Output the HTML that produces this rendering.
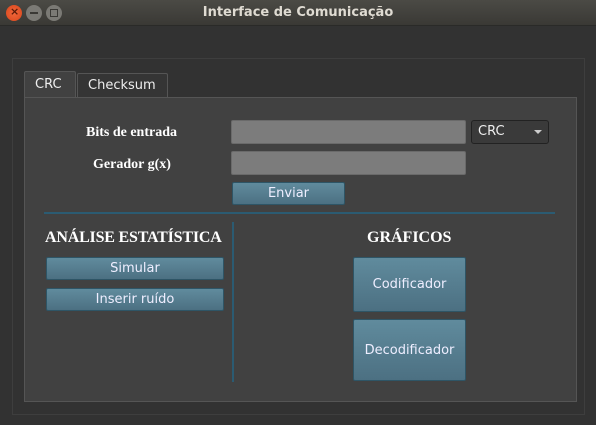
<!DOCTYPE html>
<html><head><style>
*{margin:0;padding:0;box-sizing:border-box}
body{width:596px;height:425px;background:#323232;position:relative;overflow:hidden;font-family:"DejaVu Sans","Liberation Sans",sans-serif;color:#eee}
.a{position:absolute}
#title{left:0;top:0;width:596px;height:26px;background:linear-gradient(#4b4a45,#3a3935);border-bottom:1px solid #2a2a28}
#title .t{left:0;width:596px;top:5px;text-align:center;font-weight:bold;font-size:13px;color:#dfdbd2}
.c{width:16px;height:16px;border-radius:50%;top:5px}
.btn{background:linear-gradient(#608b9d,#4c7082);border:1px solid #2e5566;border-radius:2px;color:#eef;font-size:13px;display:flex;align-items:center;justify-content:center}
.lbl{font-family:"Liberation Serif",serif;font-weight:bold;font-size:14px;color:#fff}
.inp{background:#7c7c7c;border:1px solid #6a6a6a;border-radius:2px}
</style></head><body>
<div id="title" class="a">
<div class="a c" style="left:6px;background:radial-gradient(#f0663a,#d9471c)"><span class="a" style="left:4px;top:0;font-size:11px;color:#5a1a08;font-weight:bold">×</span></div>
<div class="a c" style="left:26px;background:#7b7a75"><div class="a" style="left:4px;top:7px;width:8px;height:2px;background:#3a3935"></div></div>
<div class="a c" style="left:46px;background:#7b7a75"><div class="a" style="left:4px;top:4px;width:8px;height:8px;border:1.5px solid #3a3935"></div></div>
<div class="a t">Interface de Comunicação</div>
</div>
<div class="a" style="left:12px;top:58px;width:573px;height:357px;border:1px solid #3e3e3e"></div>
<div class="a" style="left:24px;top:71px;width:52px;height:27px;background:#414141;border:1px solid #555;border-bottom:none;border-radius:2px 2px 0 0;font-size:13px;padding:5px 0 0 10px">CRC</div>
<div class="a" style="left:77px;top:73px;width:91px;height:24px;background:#353535;border:1px solid #555;border-bottom:none;border-radius:2px 2px 0 0;font-size:13px;padding:4px 0 0 10px">Checksum</div>
<div class="a" style="left:24px;top:97px;width:553px;height:305px;background:#414141;border:1px solid #555"></div>
<div class="a lbl" style="left:86px;top:125px">Bits de entrada</div>
<div class="a lbl" style="left:93px;top:157px">Gerador g(x)</div>
<div class="a inp" style="left:231px;top:120px;width:235px;height:24px"></div>
<div class="a inp" style="left:231px;top:151px;width:235px;height:24px"></div>
<div class="a" style="left:471px;top:120px;width:78px;height:24px;background:#3a3a3a;border:1px solid #222;border-radius:3px;font-size:13px;padding:3px 0 0 6px">CRC<span class="a" style="left:62px;top:9px;border:4px solid transparent;border-top:4px solid #ccc"></span></div>
<div class="a btn" style="left:232px;top:182px;width:113px;height:23px">Enviar</div>
<div class="a" style="left:44px;top:212px;width:511px;height:2px;background:#2b5b72"></div>
<div class="a" style="left:232px;top:222px;width:2px;height:160px;background:#2b5b72"></div>
<div class="a lbl" style="left:45px;top:229px;font-size:16px;letter-spacing:-0.2px">ANÁLISE ESTATÍSTICA</div>
<div class="a lbl" style="left:367px;top:229px;font-size:16px">GRÁFICOS</div>
<div class="a btn" style="left:46px;top:257px;width:178px;height:23px">Simular</div>
<div class="a btn" style="left:46px;top:288px;width:178px;height:23px">Inserir ruído</div>
<div class="a btn" style="left:353px;top:257px;width:113px;height:55px">Codificador</div>
<div class="a btn" style="left:353px;top:319px;width:113px;height:62px">Decodificador</div>
</body></html>
